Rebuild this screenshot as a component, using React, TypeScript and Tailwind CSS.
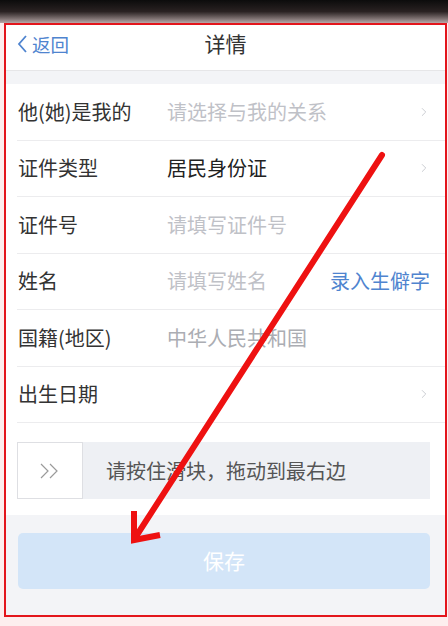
import { ChevronRight } from "lucide-react";

const font = { fontFamily: '"Noto Sans CJK SC", "Noto Sans", sans-serif' };

interface Row {
  label: string;
  value: string;
  tone: "muted" | "soft" | "dark";
  arrow?: boolean;
  action?: string;
}

const rows: Row[] = [
  { label: "他(她)是我的", value: "请选择与我的关系", tone: "muted", arrow: true },
  { label: "证件类型", value: "居民身份证", tone: "dark", arrow: true },
  { label: "证件号", value: "请填写证件号", tone: "muted" },
  { label: "姓名", value: "请填写姓名", tone: "muted", action: "录入生僻字" },
  { label: "国籍(地区)", value: "中华人民共和国", tone: "soft" },
  { label: "出生日期", value: "", tone: "dark", arrow: true },
];

const toneClass = {
  muted: "flex-1 text-[20px] text-[#bfc1c7]",
  soft: "flex-1 text-[20px] text-[#abadb3]",
  dark: "flex-1 text-[20px] text-[#222]",
};

export default function App() {
  return (
    <div
      className="relative w-[448px] h-[626px] overflow-hidden bg-[#fdeeee]"
      style={font}
    >
      {/* blurred status bar strip */}
      <div className="h-[23px] bg-gradient-to-b from-[#0c0c0c] via-[#2a2222] to-[#b8a8a8]" />

      {/* framed screen */}
      <div className="ml-[4px] w-[443px] h-[594px] border-2 border-[#e3151c] bg-[#f3f4f7] flex flex-col">
        {/* header */}
        <div className="relative h-[46px] pb-[8px] bg-white border-b border-[#e6e6e8] flex items-center justify-center">
          <div className="absolute left-[10px] top-0 h-[38px] flex items-center text-[#4f84cf]">
            <svg width="13" height="20" viewBox="0 0 13 20" fill="none">
              <polyline
                points="10,2 3,10 10,18"
                stroke="#4f84cf"
                strokeWidth="1.8"
                fill="none"
              />
            </svg>
            <span className="text-[18.5px] ml-[3px] leading-none">返回</span>
          </div>
          <span className="text-[21px] text-[#333] leading-none">详情</span>
        </div>

        <div className="h-[13px]" />

        {/* form rows */}
        <div className="bg-white">
          {rows.map((row) => (
            <div
              key={row.label}
              className="ml-[11px] h-[56.5px] border-b border-[#ececee] flex items-center pr-[14px]"
            >
              <span className="w-[150px] pl-[1px] text-[20px] text-[#333]">
                {row.label}
              </span>
              <span className={toneClass[row.tone]}>{row.value}</span>
              {row.action && (
                <span className="text-[20px] text-[#4f84cf] mr-[1px]">
                  {row.action}
                </span>
              )}
              {row.arrow && (
                <ChevronRight size={14} strokeWidth={1.5} className="text-[#c4c6cc]" />
              )}
            </div>
          ))}

          {/* slide to verify */}
          <div className="pt-[19px] pb-[16px] pl-[11px] pr-[15px]">
            <div className="h-[57px] flex bg-[#eef0f4]">
              <div className="w-[66px] bg-white border border-[#dedfe3] flex items-center justify-center">
                <svg width="24" height="18" viewBox="0 0 24 18" fill="none">
                  <polyline points="3,2 10,9 3,16" stroke="#9a9a9a" strokeWidth="1.2" />
                  <polyline points="12,2 19,9 12,16" stroke="#9a9a9a" strokeWidth="1.2" />
                </svg>
              </div>
              <div className="flex items-center pl-[23px] text-[20px] text-[#555]">
                请按住滑块，拖动到最右边
              </div>
            </div>
          </div>
        </div>

        {/* save */}
        <div className="pt-[18px] pl-[12px] pr-[15px]">
          <button className="w-full h-[56px] rounded-[5px] bg-[#d3e5f8] text-white text-[21px]">
            保存
          </button>
        </div>
      </div>

      {/* red annotation arrow */}
      <svg
        className="absolute left-0 top-0 pointer-events-none"
        width="448"
        height="626"
        viewBox="0 0 448 626"
      >
        <g stroke="#ee1111" strokeWidth="6" strokeLinecap="round" fill="none">
          <line x1="382" y1="155" x2="135" y2="538" />
          <polyline points="134,511 134,540 160,535" strokeLinejoin="miter" strokeLinecap="butt" />
        </g>
      </svg>
    </div>
  );
}
